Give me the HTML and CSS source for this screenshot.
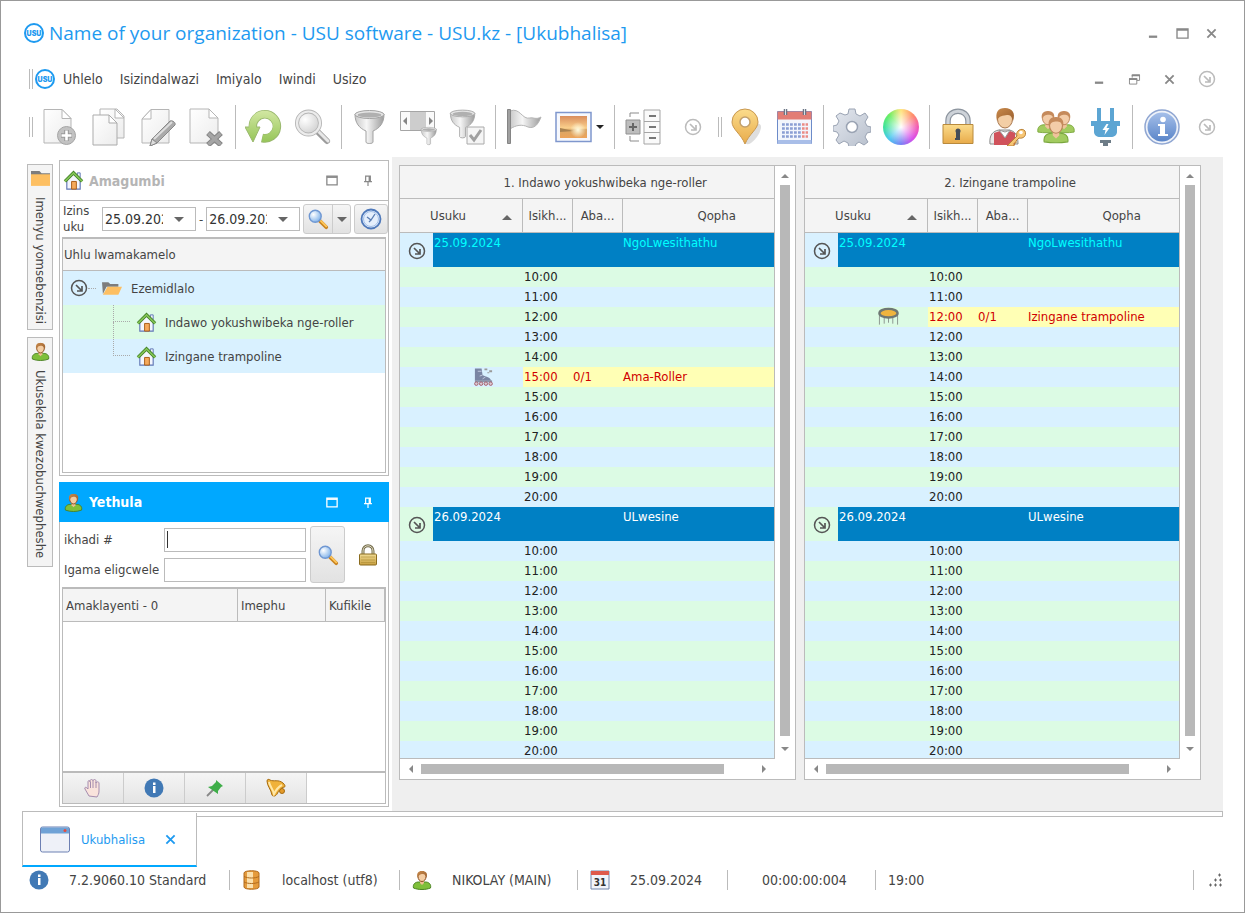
FILE: index.html
```html
<!DOCTYPE html>
<html lang="zu">
<head>
    <meta charset="UTF-8">
    <meta name="viewport" content="width=device-width, initial-scale=1.0">
    <title>Name of your organization - USU software - USU.kz - [Ukubhalisa]</title>
    <link rel="stylesheet" href="styles.css">
</head>
<body>

<!-- Shared icons -->
<svg class="sprite" aria-hidden="true">
    <defs>
        <linearGradient id="paper" x1="0" y1="0" x2="1" y2="1">
            <stop offset="0" stop-color="#ffffff"/><stop offset="1" stop-color="#ececec"/>
        </linearGradient>
        <linearGradient id="steel" x1="0" y1="0" x2="1" y2="0">
            <stop offset="0" stop-color="#c9c9c9"/><stop offset=".4" stop-color="#f6f6f6"/><stop offset="1" stop-color="#9c9c9c"/>
        </linearGradient>
        <linearGradient id="gold" x1="0" y1="0" x2="0" y2="1">
            <stop offset="0" stop-color="#fbdc8c"/><stop offset="1" stop-color="#e8ab4a"/>
        </linearGradient>
        <linearGradient id="olive" x1="0" y1="0" x2="0" y2="1">
            <stop offset="0" stop-color="#f0dc96"/><stop offset="1" stop-color="#c9a040"/>
        </linearGradient>
        <linearGradient id="leaf" gradientUnits="userSpaceOnUse" x1="0" y1="2" x2="0" y2="36">
            <stop offset="0" stop-color="#d3e8a4"/><stop offset="1" stop-color="#92c353"/>
        </linearGradient>
        <linearGradient id="sky" x1="0" y1="0" x2="0" y2="1">
            <stop offset="0" stop-color="#a5bfe9"/><stop offset="1" stop-color="#5a85c9"/>
        </linearGradient>
        <linearGradient id="sunset" x1="0" y1="0" x2="0" y2="1">
            <stop offset="0" stop-color="#d98d5c"/><stop offset=".55" stop-color="#fbd08c"/><stop offset=".62" stop-color="#d9a868"/><stop offset="1" stop-color="#eda45a"/>
        </linearGradient>
        <linearGradient id="hair" x1="0" y1="0" x2="1" y2="1">
            <stop offset="0" stop-color="#c98a4b"/><stop offset="1" stop-color="#9a5f2e"/>
        </linearGradient>
        <linearGradient id="gear" x1="0" y1="0" x2="1" y2="1">
            <stop offset="0" stop-color="#e4e8ef"/><stop offset="1" stop-color="#b7bfcc"/>
        </linearGradient>
        <radialGradient id="glow">
            <stop offset="0" stop-color="#fffbe0"/><stop offset="1" stop-color="#fffbe0" stop-opacity="0"/>
        </radialGradient>
        <radialGradient id="glass" cx=".35" cy=".35" r=".7">
            <stop offset="0" stop-color="#ffffff"/><stop offset="1" stop-color="#7fb2ea"/>
        </radialGradient>
        <radialGradient id="glass-gray" cx=".35" cy=".35" r=".7">
            <stop offset="0" stop-color="#ffffff"/><stop offset="1" stop-color="#cfcfcf"/>
        </radialGradient>
    </defs>
    <symbol id="i-arrow" viewBox="0 0 18 18">
        <circle cx="9" cy="9" r="7.500" fill="none" stroke="currentColor" stroke-width="1.500"/>
        <path d="M6 6l5.500 5.500M12 7v5H7" fill="none" stroke="currentColor" stroke-width="1.700"/>
    </symbol>
    <symbol id="i-search" viewBox="0 0 24 24">
        <path d="M14 14l7 7" stroke="#c98420" stroke-width="4" stroke-linecap="round"/>
        <path d="M15 14l6 6" stroke="#ffc75a" stroke-width="2" stroke-linecap="round"/>
        <circle cx="9" cy="9" r="6.500" fill="url(#glass)" stroke="#6f97d2" stroke-width="1.500"/>
    </symbol>
    <symbol id="i-house" viewBox="0 0 22 22">
        <path d="M4 10v10h14V10L11 4z" fill="#f3f6fd" stroke="#6077b5" stroke-width="1.200"/>
        <path d="M15 3h3v5l-3-2z" fill="#f3f6fd" stroke="#6077b5"/>
        <path d="M2 12l9-9 9 9" fill="none" stroke="#3f7f25" stroke-width="3.400"/>
        <path d="M2 12l9-9 9 9" fill="none" stroke="#83c455" stroke-width="1.800"/>
        <path d="M9 12h5v8H9z" fill="#f5a95b" stroke="#a85c17"/>
    </symbol>
    <symbol id="i-user" viewBox="0 0 20 20">
        <path d="M1.500 18c-1-4 2-6 5-6h7c3 0 6 2 5 6-5 2-12 2-17 0z" fill="#7fbf3a" stroke="#4b8322"/>
        <path d="M8 10h4v3l-2 2-2-2z" fill="#edbd90"/>
        <ellipse cx="10" cy="6.500" rx="4" ry="5" fill="#f4cda3" stroke="#8b4f20"/>
        <path d="M5.500 8C4.500 3 6 1 10 1s6 2 4.500 7c-1-4-3-4-4.500-4s-3.500 1-4.500 4z" fill="url(#hair)"/>
    </symbol>
    <symbol id="i-person" viewBox="0 0 24 26">
        <path d="M1 24c-1-6 3-8 7-8h8c4 0 8 2 7 8-6 1-16 1-22 0z" fill="#a2cb5f" stroke="#79a63c"/>
        <path d="M9 14h6v4l-3 3-3-3z" fill="#efc39b"/>
        <ellipse cx="12" cy="9" rx="6" ry="7" fill="#f3cca8" stroke="#b98257"/>
        <path d="M5.500 10C4 4 7 1 12 1s8 3 6.500 9c-1-4-3-5-6-5s-6 1-7 5z" fill="#c58a5b"/>
    </symbol>
    <symbol id="i-info" viewBox="0 0 20 20">
        <circle cx="10" cy="10" r="9.500" fill="#4179b5"/>
        <path d="M9 8h2.500v7H9zM9 4.500h2.500V7H9z" fill="#fff"/>
    </symbol>
    <symbol id="i-funnel" viewBox="0 0 38 38">
        <path d="M4 6c0 9 4 14 11 17v11c0 2 7 2 7 0V23c7-3 11-8 11-17z" fill="url(#steel)" stroke="#a2a2a2"/>
        <ellipse cx="18.500" cy="6.500" rx="14.500" ry="4" fill="#e6e6e6" stroke="#a2a2a2"/>
        <ellipse cx="18.500" cy="7" rx="12" ry="2.500" fill="#b0b0b0"/>
    </symbol>
    <symbol id="i-restore" viewBox="0 0 14 12">
        <path d="M1 1h12v10H1z" fill="none" stroke="currentColor" stroke-width="1.500"/><path d="M1 1h12v2H1z" fill="currentColor"/>
    </symbol>
    <symbol id="i-pin" viewBox="0 0 12 14">
        <path d="M3 1.500h6v7H3zM7.500 2v6M1 8.500h10M6 9v5" fill="none" stroke="currentColor" stroke-width="1.500"/>
    </symbol>
    <symbol id="i-close" viewBox="0 0 12 12">
        <path d="M1.500 1.500l9 9M10.500 1.500l-9 9" stroke="currentColor" stroke-width="2"/>
    </symbol>
    <symbol id="i-min" viewBox="0 0 12 12"><path d="M1 9.500h9" stroke="currentColor" stroke-width="2.500"/></symbol>
</svg>

<div class="app">

<header class="titlebar">
    <svg class="logo" viewBox="0 0 22 22"><circle cx="11" cy="11" r="9" fill="#fff" stroke="#1e9af0" stroke-width="2"/><text x="11" y="13.500" text-anchor="middle">USU</text></svg>
    <h1>Name of your organization - USU software - USU.kz - [Ukubhalisa]</h1>
    <div class="window-buttons">
        <button aria-label="Minimize"><svg><use href="#i-min"/></svg></button>
        <button aria-label="Maximize"><svg><use href="#i-restore"/></svg></button>
        <button aria-label="Close"><svg><use href="#i-close"/></svg></button>
    </div>
</header>

<nav class="menubar">
    <span class="grip"></span>
    <svg class="logo" viewBox="0 0 22 22"><circle cx="11" cy="11" r="9" fill="#fff" stroke="#1e9af0" stroke-width="2"/><text x="11" y="13.500" text-anchor="middle">USU</text></svg>
    <a href="#">Uhlelo</a>
    <a href="#">Isizindalwazi</a>
    <a href="#">Imiyalo</a>
    <a href="#">Iwindi</a>
    <a href="#">Usizo</a>
    <div class="child-buttons">
        <button aria-label="Minimize"><svg><use href="#i-min"/></svg></button>
        <button aria-label="Restore"><svg viewBox="0 0 14 12"><path d="M4.500 4V1h8v6h-3M1.500 5h8v6h-8z" fill="none" stroke="currentColor"/><path d="M4 .5h9v2H4zM1 4.500h9v2H1z" fill="currentColor"/></svg></button>
        <button aria-label="Close"><svg><use href="#i-close"/></svg></button>
        <button class="more" aria-label="More"><svg><use href="#i-arrow"/></svg></button>
    </div>
</nav>

<div class="toolbar">
    <span class="grip"></span>
    <button aria-label="Add"><svg viewBox="0 0 38 38"><path d="M3 1.500h18l9 9V35H3z" fill="url(#paper)" stroke="#b5b5b5"/><path d="M21 1.500v9h9z" fill="#fff" stroke="#b5b5b5"/><circle cx="25.500" cy="27.500" r="9" fill="#c2c2c2" stroke="#a5a5a5"/><path d="M25.500 22v11M20 27.500h11" stroke="#999" stroke-width="4.600"/><path d="M25.500 22.500v10M20.500 27.500h10" stroke="#fff" stroke-width="2.600"/></svg></button>
    <button aria-label="Copy"><svg viewBox="0 0 38 38"><path d="M10 1h17l7 7v22H10z" fill="url(#paper)" stroke="#b5b5b5"/><path d="M25 1v9h9z" fill="#fff" stroke="#b5b5b5"/><path d="M3 7h16l8 8v22H3z" fill="url(#paper)" stroke="#ababab"/><path d="M19 7v8h8z" fill="#fff" stroke="#ababab"/></svg></button>
    <button aria-label="Edit"><svg viewBox="0 0 38 38"><path d="M12 1.500h18V35H3V11z" fill="url(#paper)" stroke="#b5b5b5"/><path d="M12 1.500V11H3z" fill="#fff" stroke="#b5b5b5"/><path d="M11 38l2-7 18-18c3-1 6 2 5 4L18 35z" fill="#aaa" stroke="#8a8a8a"/><path d="M15 31l18-17" stroke="#ddd" stroke-width="2"/><path d="M11 38l2-7 5 4z" fill="#ddd" stroke="#888"/></svg></button>
    <button aria-label="Delete"><svg viewBox="0 0 38 38"><path d="M2 1h19l9 9v25H2z" fill="url(#paper)" stroke="#b5b5b5"/><path d="M21 1v9h9z" fill="#fff" stroke="#b5b5b5"/><path d="M20 25l13 12M33 25L20 37" stroke="#858585" stroke-width="5.500"/><path d="M20.500 25.500l12 11M32.500 25.500l-12 11" stroke="#a5a5a5" stroke-width="3.500"/></svg></button>
    <span class="sep"></span>
    <button aria-label="Refresh"><svg viewBox="0 0 38 38"><path d="M8 20A12 12 0 1 1 17 30" fill="none" stroke="#9ab86e" stroke-width="8.500"/><path d="M0 19h15L8 34z" fill="url(#leaf)" stroke="#9ab86e"/><path d="M8 21A12 12 0 1 1 17.500 30" fill="none" stroke="url(#leaf)" stroke-width="7"/></svg></button>
    <button aria-label="Search"><svg viewBox="0 0 38 38"><path d="M24 24l9 9" stroke="#9c9c9c" stroke-width="6" stroke-linecap="round"/><path d="M24 23l10 10" stroke="#e8e8e8" stroke-width="3" stroke-linecap="round"/><circle cx="14.500" cy="15" r="11.500" fill="url(#glass-gray)" stroke="#b5b5b5" stroke-width="4"/><circle cx="14.500" cy="15" r="11.500" fill="none" stroke="#ececec" stroke-width="2.200"/></svg></button>
    <span class="sep"></span>
    <button aria-label="Filter"><svg viewBox="0 0 38 38"><use href="#i-funnel"/></svg></button>
    <button aria-label="Filter panel"><svg viewBox="0 0 38 38"><path d="M.5 3.500h34v19H.5z" fill="#fafafa" stroke="#a5a5a5"/><path d="M10 4h16v18H10z" fill="#cdcdcd"/><path d="M7 9v8l-4-4zM29 9v8l4-4z" fill="#858585"/><use href="#i-funnel" x="19" y="18" width="20" height="20"/></svg></button>
    <button aria-label="Apply filter"><svg viewBox="0 0 38 38"><use href="#i-funnel" x="-2" y="0" width="32" height="32"/><path d="M18 19h17v17H18z" fill="#f5f5f5" stroke="#aaa"/><path d="M21 27l4 5 7-10" fill="none" stroke="#a0a0a0" stroke-width="3"/></svg></button>
    <span class="sep"></span>
    <button aria-label="Flag"><svg viewBox="0 0 38 38"><path d="M4 3c10-4 12 9 20 7 3-1 6 2 11-1-3 8-7 12-13 10-6-3-12-2-18 2z" fill="url(#steel)" stroke="#b5b5b5"/><path d="M1.500 1.500h3v34h-3z" fill="#a0a0a0" stroke="#858585"/></svg></button>
    <button aria-label="Image"><svg viewBox="0 0 38 38"><path d="M1 4.500h35v29H1z" fill="#f6f8fd" stroke="#7f97cd" stroke-width="1.500"/><path d="M5 8h27v22H5z" fill="url(#sunset)"/><path d="M5 20l14 3-14 1z" fill="#a98250"/><circle cx="23" cy="22" r="8" fill="url(#glow)"/></svg></button>
    <button class="drop" aria-label="Image menu"><span class="caret dark"></span></button>
    <span class="sep"></span>
    <button aria-label="Tree"><svg viewBox="0 0 38 38"><path d="M19 2h16v34H19zM19 13.500h16M19 24.500h16" fill="#fafafa" stroke="#a5a5a5"/><path d="M24 8h7M24 19h7M24 30h7" stroke="#777" stroke-width="2"/><path d="M14 5H5v4M5 28v5h9" fill="none" stroke="#8b8b8b"/><path d="M1 12h14v14H1z" fill="#bdbdbd" stroke="#919191"/><path d="M8 15v8M4 19h8" stroke="#666" stroke-width="2"/></svg></button>
    <button class="more" aria-label="More"><svg><use href="#i-arrow"/></svg></button>
    <span class="grip"></span>
    <button aria-label="Map"><svg viewBox="0 0 38 38"><ellipse cx="26" cy="26" rx="5" ry="12" fill="#bdbdbd" opacity=".5" transform="rotate(35 26 26)"/><path d="M18 36C14 26 5 21 5 14a13 13 0 0 1 26 0c0 7-9 12-13 22z" fill="url(#gold)" stroke="#c9984f"/><circle cx="18" cy="14" r="5" fill="#fff" stroke="#c2a06c" stroke-width="1.500"/></svg></button>
    <button aria-label="Calendar"><svg viewBox="0 0 38 38"><path d="M1.500 3.500h34v32h-34z" fill="#f3f6fc" stroke="#6c8bc9"/><path d="M1.500 3.500h34v8h-34z" fill="#e27d75"/><path d="M1.500 32h34v4h-34z" fill="#a9bee8"/><path d="M6 16.500h19M6 20.500h19M6 24.500h19M6 28.500h19" stroke="#8b9fd3" stroke-width="2.500" stroke-dasharray="2.800 1.200"/><path d="M26 16.500h6M26 20.500h6M26 24.500h6M26 28.500h6" stroke="#ea8c85" stroke-width="2.500" stroke-dasharray="2.600 1"/><path d="M9.500 1v6M28.500 1v6" stroke="#6c7685" stroke-width="3.500"/><path d="M9.500 1v6M28.500 1v6" stroke="#dbe0e7"/></svg></button>
    <span class="sep"></span>
    <button aria-label="Settings"><svg viewBox="0 0 38 38"><path d="M16 1h6l1 5 4 2 5-3 3 4-3 5 2 4 4 1v5l-4 1-2 4 3 5-4 3-5-3-3 2-1 3h-6l-1-4-4-2-5 3-3-4 3-5-2-3-4-1v-5l4-1 2-4-3-5 4-3 5 2 3-1z" fill="url(#gear)" stroke="#9aa3b3" stroke-linejoin="round"/><circle cx="19" cy="19" r="5.500" fill="#fff" stroke="#9aa3b3" stroke-width="1.500"/></svg></button>
    <button aria-label="Colours"><span class="wheel"></span></button>
    <span class="sep"></span>
    <button aria-label="Lock"><svg viewBox="0 0 38 38"><path d="M9 17v-4c0-13 20-13 20 0v4" fill="none" stroke="#8c949e" stroke-width="5.500"/><path d="M9 17v-4c0-13 20-13 20 0v4" fill="none" stroke="#ced3d9" stroke-width="3.200"/><path d="M4 16.500h30v19H4z" fill="url(#gold)" stroke="#b98a3d"/><circle cx="19" cy="23" r="2.500" fill="#454d58"/><path d="M17 24h4v8h-5v-2h1z" fill="#454d58"/></svg></button>
    <button aria-label="Access"><svg viewBox="0 0 38 38"><path d="M2 36c-1-9 3-13 9-14h10c6 1 9 5 9 14z" fill="#ebe8e8" stroke="#8a8a8a"/><path d="M6 37V25l6-2 5 5 5-5 5 2v12z" fill="#d0525b"/><path d="M11 22l6 8 5-8-5 2z" fill="#fff" stroke="#999"/><ellipse cx="17" cy="11" rx="7.500" ry="9" fill="#f3cea5" stroke="#a8754a"/><path d="M9 13C7 4 10 0 17 0s11 5 8 13c-1-5-3-6-6-6-4 1-8 0-10 6z" fill="url(#hair)"/><path d="M19 38l10-10c-2-5 5-9 8-5 2 5-2 8-6 7l-3 3v2h-2v3z" fill="#f7c675" stroke="#b98136"/><circle cx="33" cy="24.500" r="1.800" fill="#fff"/></svg></button>
    <button aria-label="Users"><svg viewBox="0 0 38 38"><use href="#i-person" x="0" y="2" width="22" height="24"/><use href="#i-person" x="16" y="2" width="22" height="24"/><use href="#i-person" x="6" y="8" width="26" height="28"/></svg></button>
    <button aria-label="Connect"><svg viewBox="0 0 38 38"><path d="M11 0h4v13h9V0h4v13h6v5h-3v6c0 3-3 5-6 5H14c-3 0-6-2-6-5v-6H5v-5h6z" fill="#5ca5d3"/><path d="M14 32h11v3h-3v3h-5v-3h-3z" fill="#6d7c87"/><path d="M20.500 16l-4 6h3l-1 5 5-7h-3l2-4z" fill="#fff"/></svg></button>
    <span class="sep"></span>
    <button aria-label="Info"><svg viewBox="0 0 38 38"><circle cx="19" cy="19" r="17" fill="#eef2f9" stroke="#8fa6d2" stroke-width="1.500"/><circle cx="19" cy="19" r="14.500" fill="url(#sky)"/><path d="M15 16h7v10h3v2H15v-2h2v-8h-2z" fill="#fff"/><circle cx="20" cy="11.500" r="2.800" fill="#fff"/></svg></button>
    <button class="more last" aria-label="More"><svg><use href="#i-arrow"/></svg></button>
</div>

<main class="workspace">
    <aside class="side-tabs">
        <button>
            <svg viewBox="0 0 18 16"><path d="M0 1h8l2 2h8v3H0z" fill="#7d7d7d"/><path d="M0 4h18v11H0z" fill="#fdbf62"/></svg>
            <span>Imenyu yomsebenzisi</span>
        </button>
        <button>
            <svg><use href="#i-user"/></svg>
            <span>Ukusekela kwezobuchwepheshe</span>
        </button>
    </aside>

    <div class="docks">
        <section class="dock rooms">
            <h2><svg class="icon"><use href="#i-house"/></svg>Amagumbi
                <button aria-label="Maximize"><svg><use href="#i-restore"/></svg></button>
                <button aria-label="Pin"><svg><use href="#i-pin"/></svg></button>
            </h2>
            <form class="dates">
                <label for="date-from">Izins uku</label>
                <div class="date-box"><input id="date-from" type="text" value="25.09.2024"><button type="button" aria-label="Open calendar"><span class="caret"></span></button></div>
                <span>-</span>
                <div class="date-box"><input id="date-to" type="text" value="26.09.2024" aria-label="Izinsuku"><button type="button" aria-label="Open calendar"><span class="caret"></span></button></div>
                <div class="split">
                    <button type="button" aria-label="Search"><svg><use href="#i-search"/></svg></button>
                    <button type="button" aria-label="Search menu"><span class="caret"></span></button>
                </div>
                <button type="button" class="clock" aria-label="Now"><svg viewBox="0 0 22 22"><circle cx="11" cy="11" r="9.500" fill="#e5effc" stroke="#4f79ba" stroke-width="1.800"/><circle cx="11" cy="11" r="7.500" fill="none" stroke="#a4c0e8"/><path d="M7 9l4 3 4-6M9 14l2-2" fill="none" stroke="#5a7db3" stroke-width="1.300"/></svg></button>
            </form>
            <div class="tree">
                <h3>Uhlu lwamakamelo</h3>
                <ul>
                    <li><svg class="expand"><use href="#i-arrow"/></svg><i class="twig"></i><svg class="folder" viewBox="0 0 22 16"><path d="M0 1h7l2 2h9v3H5L1 14z" fill="#7d7d7d"/><path d="M6 6h16l-4 9H1z" fill="#fdbf62"/></svg>Ezemidlalo</li>
                    <li class="leaf"><i class="branch"></i><svg class="icon"><use href="#i-house"/></svg>Indawo yokushwibeka nge-roller</li>
                    <li class="leaf"><i class="branch"></i><svg class="icon"><use href="#i-house"/></svg>Izingane trampoline</li>
                </ul>
            </div>
        </section>

        <section class="dock present">
            <h2><svg class="icon"><use href="#i-user"/></svg>Yethula
                <button aria-label="Maximize"><svg><use href="#i-restore"/></svg></button>
                <button aria-label="Pin"><svg><use href="#i-pin"/></svg></button>
            </h2>
            <form class="card-form">
                <div class="fields">
                    <label for="card">ikhadi #</label><input id="card" class="active" type="text">
                    <label for="fullname">Igama eligcwele</label><input id="fullname" type="text">
                </div>
                <button type="button" class="find" aria-label="Search"><svg><use href="#i-search"/></svg></button>
                <button type="button" class="lock" aria-label="Lock"><svg viewBox="0 0 20 22"><path d="M5 11V7c0-7 10-7 10 0v4" fill="none" stroke="#77704f" stroke-width="3"/><path d="M5 11V7c0-7 10-7 10 0v4" fill="none" stroke="#ddd8c0"/><rect x="1.500" y="10" width="17" height="11" rx="1" fill="url(#olive)" stroke="#8a6b1e"/><path d="M3 13h14M3 16h14M3 18.500h14" stroke="#a5852c" opacity=".5"/></svg></button>
            </form>
            <div class="clients">
                <table>
                    <thead><tr><th>Amaklayenti - 0</th><th>Imephu</th><th>Kufikile</th></tr></thead>
                </table>
                <div class="actions">
                    <button aria-label="Stop"><svg viewBox="0 0 20 20"><path d="M6 18L2 11c-1-2 1-2 2-1l1 1V4c0-2 2-2 2 0v-1c0-2 3-2 3 0 0-2 3-2 3 0v2c1-2 3-1 3 0v8c0 3-1 4-2 6z" fill="#f9e3dc" stroke="#a58cae"/><path d="M7.500 4v6M10 3v7M13 4v6" stroke="#a58cae"/></svg></button>
                    <button aria-label="Info"><svg><use href="#i-info"/></svg></button>
                    <button aria-label="Pin"><svg viewBox="0 0 20 20"><path d="M2 18l7-7" stroke="#888" stroke-width="1.800"/><path d="M11 2l7 6-2 1-3 4v3L3 9l4-1 4-4z" fill="#3fae49"/></svg></button>
                    <button aria-label="Notify"><svg viewBox="0 0 20 20"><circle cx="16" cy="13" r="2.500" fill="#e59b2a" stroke="#a66b10"/><path d="M1 3c0-2 2-2 3-1 4 2 8-1 13 3 2 2 3 4 1 4-3 1-5 3-7 7-1 2-4 3-5 1-1-6-5-9-5-14z" fill="#f0b23a" stroke="#a66b10"/><path d="M3 4c1 5 4 7 5 12 2-4 4-7 8-9" fill="none" stroke="#ffe8a8" stroke-width="2"/></svg></button>
                </div>
            </div>
        </section>
    </div>

    <div class="mdi">
        <section class="schedule" data-event="15:00" data-title="Ama-Roller" data-icon="roller">
            <div class="grid-view"><table>
                <colgroup><col class="col-toggle"><col class="col-day"><col class="col-short"><col class="col-short"><col></colgroup>
                <thead>
                    <tr><th colspan="5">1. Indawo yokushwibeka nge-roller</th></tr>
                    <tr><th class="day" colspan="2">Usuku<span class="sort"></span></th><th>Isikh...</th><th>Aba...</th><th>Qopha</th></tr>
                </thead>
                <tbody></tbody>
            </table></div>
            <div class="vscroll"><span class="up"></span><span class="thumb"></span><span class="down"></span></div>
            <div class="hscroll"><span class="left"></span><span class="track"><span class="thumb"></span></span><span class="right"></span></div>
        </section>
        <section class="schedule" data-event="12:00" data-title="Izingane trampoline" data-icon="trampoline">
            <div class="grid-view"><table>
                <colgroup><col class="col-toggle"><col class="col-day"><col class="col-short"><col class="col-short"><col></colgroup>
                <thead>
                    <tr><th colspan="5">2. Izingane trampoline</th></tr>
                    <tr><th class="day" colspan="2">Usuku<span class="sort"></span></th><th>Isikh...</th><th>Aba...</th><th>Qopha</th></tr>
                </thead>
                <tbody></tbody>
            </table></div>
            <div class="vscroll"><span class="up"></span><span class="thumb"></span><span class="down"></span></div>
            <div class="hscroll"><span class="left"></span><span class="track"><span class="thumb"></span></span><span class="right"></span></div>
        </section>
    </div>
</main>

<div class="tabstrip">
    <div class="tab">
        <svg viewBox="0 0 30 26"><rect x=".5" y=".5" width="29" height="25" rx="2" fill="#eef1f8" stroke="#6d80b3"/><path d="M1 1h28v6H1z" fill="#6fa2d6"/><circle cx="25" cy="4" r="1.500" fill="#e54b3c"/></svg>
        <a href="#">Ukubhalisa</a>
        <button aria-label="Close tab"><svg><use href="#i-close"/></svg></button>
    </div>
</div>

<footer class="statusbar">
    <div class="version"><svg><use href="#i-info"/></svg>7.2.9060.10 Standard</div>
    <div class="host"><svg viewBox="0 0 20 20"><path d="M2 3c0-3 15-3 15 0v14c0 3-15 3-15 0z" fill="#e59b3c" stroke="#b06a1d"/><path d="M5 2h6v16H5z" fill="#fbe0ac"/><path d="M2 6.500c4 2 11 2 15 0M2 12c4 2 11 2 15 0" fill="none" stroke="#b06a1d"/></svg>localhost (utf8)</div>
    <div class="user"><svg><use href="#i-user"/></svg>NIKOLAY (MAIN)</div>
    <div class="date"><svg viewBox="0 0 20 20"><path d="M1 1h18v18H1z" fill="#f1f4fa" stroke="#7186ad"/><path d="M1 1h18v4H1z" fill="#df5a4b"/><text class="day-number" x="10" y="16" text-anchor="middle">31</text></svg>25.09.2024</div>
    <div class="timer">00:00:00:004</div>
    <div class="clock-now">19:00</div>
    <svg class="resize" viewBox="0 0 14 14"><path d="M10 2h3M6 7h3M11 7h3M1 12h3M6 12h3M11 12h3M11.500 .5v3M7.500 5.500v3M12.500 5.500v3M2.500 10.500v3M7.500 10.500v3M12.500 10.500v3" stroke="#666"/></svg>
</footer>

</div>

<script>
    const icons = {
        roller: '<svg viewBox="0 0 22 20"><path d="M2 1h7l1 7c4 2 8 2 9 6H2z" fill="#7a85a3"/><path d="M9 4h-4M10 8l-3 1M13 10l-3 2" stroke="#c3cade"/><path d="M2 14.500h18" stroke="#8d93a8" stroke-width="2"/><g fill="#d9c9d4" stroke="#a5606c"><circle cx="3.500" cy="17" r="1.800"/><circle cx="8.500" cy="17" r="1.800"/><circle cx="13.500" cy="17" r="1.800"/><circle cx="18.500" cy="17" r="1.800"/></g><path d="M12 1h3v2h-3zM17 3h3v2h-3zM15 5h2v1h-2z" fill="#9a9a9a"/></svg>',
        trampoline: '<svg viewBox="0 0 22 20"><path d="M1.500 6v12M20.500 6v12M6.500 9v8M15.500 9v8M11 10v6" stroke="#8a948f"/><ellipse cx="11" cy="6" rx="9.500" ry="4.500" fill="#f0b43e" stroke="#6f7773" stroke-width="2.500"/></svg>'
    };
    const days = [['25.09.2024', 'NgoLwesithathu', 'today'], ['26.09.2024', 'ULwesine', '']];

    document.querySelectorAll('.schedule').forEach(function (box) {
        const event = box.dataset.event;
        let rows = '';
        days.forEach(function (day, i) {
            rows += `<tr class="date-row ${day[2]}"><td class="toggle"><svg><use href="#i-arrow"/></svg></td><td colspan="3">${day[0]}</td><td>${day[1]}</td></tr>`;
            for (let hour = 10; hour <= 20; hour++) {
                const time = hour + ':00';
                // a booking goes above the free slot with the same time
                if (i === 0 && time === event) {
                    rows += `<tr class="booked"><td class="picture" colspan="2">${icons[box.dataset.icon]}</td><td>${time}</td><td>0/1</td><td>${box.dataset.title}</td></tr>`;
                }
                rows += `<tr><td colspan="2"></td><td>${time}</td><td></td><td></td></tr>`;
            }
        });
        box.querySelector('tbody').innerHTML = rows;
    });
</script>

</body>
</html>
```
FILE: styles.css
```css
* {
    box-sizing: border-box;
}

body {
    margin: 0;
    font-family: "DejaVu Sans Condensed", Tahoma, "Noto Sans", sans-serif;
    font-size: 13px;
    color: #444;
    background-color: #fff;
}

button {
    display: flex;
    align-items: center;
    justify-content: center;
    padding: 0;
    border: none;
    background: none;
    font: inherit;
    color: inherit;
}

a {
    color: inherit;
    text-decoration: none;
}

h1, h2, h3, ul {
    margin: 0;
    padding: 0;
    font-size: inherit;
}

svg {
    flex: none;
}

.sprite {
    position: absolute;
    width: 0;
    height: 0;
}

.app {
    display: flex;
    flex-direction: column;
    height: 100vh;
    min-height: 800px;
    border: 1px solid #999;
    overflow: hidden;
}

.logo {
    width: 22px;
    height: 22px;
}

.logo text {
    font: 900 7px Inter, Arial, sans-serif;
    fill: #1e9af0;
}

.caret {
    border: 5px solid transparent;
    border-top-color: #666;
    border-bottom: none;
}

.caret.dark {
    border-width: 4px;
    border-bottom: none;
    border-top-color: #222;
}

.grip {
    width: 4px;
    height: 20px;
    border: solid #bbb;
    border-width: 0 1px;
}

/* Title and menu */

.titlebar {
    display: flex;
    align-items: center;
    height: 64px;
    padding: 0 26px 0 22px;
    gap: 4px;
}

.titlebar h1 {
    font: 19px "Open Sans", "Noto Sans", sans-serif;
    color: #1e9af0;
}

.window-buttons,
.child-buttons {
    display: flex;
    align-items: center;
    margin-left: auto;
    gap: 16px;
    color: #888;
}

.window-buttons svg,
.child-buttons svg {
    width: 13px;
    height: 11px;
}

.child-buttons {
    gap: 22px;
}

.menubar {
    display: flex;
    align-items: center;
    height: 28px;
    padding: 0 28px 0 28px;
    gap: 17px;
    font-size: 14px;
}

.menubar .logo {
    margin: 0 -10px 0 -16px;
}

.child-buttons .more svg,
.toolbar .more svg {
    width: 18px;
    height: 18px;
    color: #bbb;
}

.toolbar {
    display: flex;
    align-items: center;
    height: 64px;
    padding: 4px 16px 0 28px;
}

.toolbar button {
    width: 49px;
}

.toolbar .grip {
    margin-left: 1px;
}

.toolbar .grip:first-child {
    margin: 0 3px 0 0;
}

.toolbar svg {
    width: 38px;
    height: 38px;
}

.toolbar .drop {
    width: 13px;
    margin: 0 5px 0 -5px;
}

.toolbar .last {
    margin-left: auto;
    width: 42px;
}

.sep {
    width: 1px;
    height: 44px;
    margin: 0 4px 0 3px;
    background-color: #bbb;
}

.wheel {
    width: 36px;
    height: 36px;
    border-radius: 50%;
    background: radial-gradient(#fff, transparent 65%), conic-gradient(#ffe680, #ff8d6b, #f25bb5, #d94dea, #7a84f5, #4dc8f0, #3fe39b, #6bee63, #ffe680);
}

/* Workspace */

.workspace {
    display: flex;
    flex: 1;
    min-height: 0;
    margin: 0 21px 0 26px;
}

.side-tabs {
    display: flex;
    flex-direction: column;
    width: 26px;
    padding-top: 7px;
    gap: 7px;
}

.side-tabs button {
    flex-direction: column;
    justify-content: flex-start;
    height: 166px;
    padding-top: 4px;
    border: 1px solid #bbb;
    background-color: #f4f4f4;
    gap: 9px;
}

.side-tabs button + button {
    height: 230px;
}

.side-tabs svg {
    width: 19px;
    height: 19px;
}

.side-tabs span {
    writing-mode: vertical-rl;
    white-space: nowrap;
}

.docks {
    display: flex;
    flex-direction: column;
    width: 330px;
    margin: 3px 3px 4px 6px;
    gap: 6px;
}

.dock {
    display: flex;
    flex-direction: column;
    border: 1px solid #bbb;
    padding: 0 2px 2px;
}

.rooms {
    height: 316px;
}

.present {
    flex: 1;
    min-height: 0;
}

.dock h2 {
    display: flex;
    align-items: center;
    height: 40px;
    margin: 0 -2px;
    padding: 0 13px 0 3px;
    gap: 5px;
    border-bottom: 1px solid #bbb;
    color: #b5b5b5;
    font-size: 14px;
}

.dock h2 button {
    width: 14px;
    margin-left: 17px;
    color: #888;
}

.dock h2 button:first-of-type {
    margin-left: auto;
}

.dock h2 button svg {
    width: 12px;
    height: 11px;
}

.icon {
    width: 21px;
    height: 21px;
}

.dock.present h2 {
    margin: -1px -3px 0;
    padding: 0 14px 0 4px;
    border: none;
    background-color: #00a8ff;
    color: #fff;
}

.dock.present h2 button {
    color: #fff;
}

.present h2 .icon {
    height: 19px;
}

.dates {
    display: flex;
    align-items: center;
    height: 36px;
    margin-right: -2px;
    gap: 3px;
}

.dates label {
    width: 37px;
    padding-left: 1px;
    line-height: 16px;
}

.date-box {
    display: flex;
    width: 94px;
    height: 24px;
    border: 1px solid #bbb;
}

.date-box input {
    width: 60px;
    padding: 0 0 0 2px;
    border: none;
    font: inherit;
    font-size: 14px;
    color: #333;
    outline: none;
}

.date-box button {
    flex: 1;
}

.split,
.clock,
.find {
    height: 30px;
    border: 1px solid #ccc;
    border-radius: 3px;
    background: linear-gradient(#f5f5f5, #e2e2e2);
}

.split {
    display: flex;
    width: 48px;
}

.split button {
    width: 28px;
}

.split button + button {
    flex: 1;
    border-left: 1px solid #ccc;
}

.split svg,
.clock svg,
.find svg {
    width: 22px;
    height: 22px;
}

.clock {
    flex: 1;
}

.tree {
    flex: 1;
    border: 1px solid #bbb;
    border-top-width: 2px;
}

.tree h3 {
    height: 32px;
    padding-left: 1px;
    line-height: 31px;
    font-weight: normal;
    border-bottom: 1px solid #bbb;
    background-color: #f4f4f4;
}

.tree ul {
    list-style-type: none;
}

.tree li {
    display: flex;
    align-items: center;
    height: 34px;
    padding-left: 7px;
    background-color: #d9f1ff;
}

.tree li:nth-child(even) {
    background-color: #dcfbe4;
}

.expand {
    width: 18px;
    height: 18px;
    color: #555;
}

.twig {
    width: 8px;
    margin-right: 6px;
    border-top: 1px dotted #aaa;
}

.folder {
    width: 20px;
    height: 15px;
    margin-right: 9px;
}

.tree .leaf {
    padding-left: 50px;
}

.branch {
    align-self: flex-start;
    width: 17px;
    height: 17px;
    margin-right: 6px;
    border: dotted #aaa;
    border-width: 0 0 1px 1px;
}

.leaf + .leaf .branch {
    margin-top: -17px;
    height: 34px;
}

.leaf .icon {
    margin-right: 8px;
}

/* Client card */

.card-form {
    display: flex;
    align-items: center;
    height: 65px;
    gap: 4px;
}

.fields {
    display: grid;
    grid-template-columns: 100px 1fr;
    flex: 1;
    align-items: center;
    row-gap: 6px;
    padding-left: 2px;
}

.fields input {
    width: 100%;
    height: 24px;
    border: 1px solid #bbb;
    padding: 0 2px;
    font: inherit;
    outline: none;
}

.fields .active {
    background: linear-gradient(#333, #333) 2px 50% / 1px 17px no-repeat;
}

.find {
    width: 35px;
    height: 57px;
}

.lock {
    width: 37px;
}

.lock svg {
    width: 20px;
    height: 22px;
}

.clients {
    display: flex;
    flex-direction: column;
    flex: 1;
    border: 1px solid #bbb;
    border-top-width: 2px;
}

.clients table {
    width: 100%;
    border-spacing: 0;
    table-layout: fixed;
}

.clients th {
    height: 33px;
    padding: 0 3px;
    border: solid #bbb;
    border-width: 0 1px 1px 0;
    background-color: #f4f4f4;
    font-weight: normal;
    text-align: left;
}

.clients th:nth-child(2) {
    width: 88px;
}

.clients th:nth-child(3) {
    width: 59px;
}

.actions {
    display: flex;
    height: 32px;
    margin-top: auto;
    border-top: 2px solid #bbb;
}

.actions button {
    width: 61px;
    border-right: 1px solid #ccc;
    background: linear-gradient(#f5f5f5, #e4e4e4);
}

.actions svg {
    width: 20px;
    height: 20px;
}

/* Schedules */

.mdi {
    display: flex;
    flex: 1;
    padding: 8px 22px 31px 7px;
    gap: 8px;
    background-color: #efefef;
}

.schedule {
    display: grid;
    flex: 1;
    grid-template: 1fr 20px / minmax(0, 1fr) 20px;
    min-height: 0;
    min-width: 0;
    border: 1px solid #bbb;
    background-color: #fff;
}

.grid-view {
    overflow: hidden;
    min-height: 0;
    border: solid #bbb;
    border-width: 0 1px 1px 0;
}

.grid-view table {
    width: 110%;
    border-spacing: 0;
    table-layout: fixed;
    color: #222;
}

.col-toggle {
    width: 33px;
}

.col-day {
    width: 90px;
}

.col-short {
    width: 50px;
}

.grid-view th {
    height: 34px;
    padding: 0;
    border: solid #bbb;
    border-width: 0 1px 1px 0;
    background-color: #f4f4f4;
    font-weight: normal;
    color: #444;
}

.grid-view tr:first-child th {
    height: 33px;
}

.grid-view .day {
    position: relative;
    padding-right: 26px;
}

.sort {
    position: absolute;
    right: 10px;
    top: 16px;
    border: 5px solid transparent;
    border-top: none;
    border-bottom-color: #666;
}

.grid-view td {
    height: 20px;
    padding: 0;
    line-height: 20px;
    vertical-align: top;
    white-space: nowrap;
    background-color: #dcfbe4;
}

.grid-view tr:nth-child(odd) td {
    background-color: #d9f1ff;
}

.grid-view td:nth-child(2) {
    padding-left: 1px;
}

.grid-view .date-row td {
    height: 34px;
}

.grid-view .date-row td:not(.toggle) {
    background-color: #0080c4;
    color: #fff;
}

.grid-view .today td:not(.toggle) {
    color: #0ff;
}

.toggle svg {
    display: block;
    width: 18px;
    height: 18px;
    margin: 9px 0 0 8px;
    color: #555;
}

.grid-view .booked td:not(.picture) {
    background-color: #ffffb5;
    color: #d00000;
}

.picture svg {
    display: block;
    width: 21px;
    height: 20px;
    margin-left: 73px;
}

.vscroll,
.hscroll {
    display: flex;
    align-items: center;
}

.vscroll {
    flex-direction: column;
    padding: 8px 0;
    gap: 7px;
}

.vscroll .thumb {
    flex: 1;
    width: 10px;
    margin-bottom: 4px;
    background-color: #b8b8b8;
}

.hscroll {
    padding: 0 9px;
    gap: 8px;
}

.hscroll .track {
    flex: 1;
}

.hscroll .thumb {
    display: block;
    width: 91%;
    height: 10px;
    background-color: #b8b8b8;
}

.up, .down, .left, .right {
    border: 4px solid transparent;
}

.up {
    border-top: none;
    border-bottom-color: #888;
}

.down {
    border-bottom: none;
    border-top-color: #888;
}

.left {
    border-left: none;
    border-right-color: #888;
}

.right {
    border-right: none;
    border-left-color: #888;
}

/* Tabs and status */

.tabstrip {
    height: 54px;
    margin: 0 21px;
    border-top: 1px solid #bbb;
}

.tabstrip::before {
    content: "";
    display: block;
    height: 4px;
    border: 1px solid #bbb;
    border-top: none;
}

.tab {
    display: flex;
    align-items: center;
    width: 175px;
    height: 54px;
    margin-top: -4px;
    padding: 0 17px;
    border: solid #bbb;
    border-width: 0 1px;
    border-bottom: 2px solid #00a8ff;
    background-color: #fff;
    color: #1e9af0;
    position: relative;
}

.tab svg {
    width: 30px;
    height: 27px;
}

.tab a {
    margin: 0 auto 0 11px;
}

.tab button {
    margin-right: 3px;
}

.tab button svg {
    width: 11px;
    height: 11px;
}

.statusbar {
    display: flex;
    align-items: center;
    height: 47px;
    padding: 0 22px 18px 28px;
    font-size: 14px;
}

.statusbar div {
    display: flex;
    align-items: center;
    height: 20px;
    padding-left: 12px;
    border-right: 1px solid #bbb;
    gap: 20px;
    white-space: nowrap;
}

.statusbar div svg {
    width: 20px;
    height: 20px;
}

.day-number {
    font-size: 10px;
    font-weight: bold;
    fill: #333;
}

.statusbar .version {
    width: 201px;
    padding-left: 0;
}

.statusbar .host {
    width: 170px;
}

.statusbar .user {
    width: 178px;
}

.statusbar .date {
    width: 150px;
}

.statusbar .timer {
    width: 148px;
    padding-left: 34px;
}

.statusbar .clock-now {
    flex: 1;
}

.resize {
    width: 14px;
    height: 14px;
    margin-left: 14px;
}
```
